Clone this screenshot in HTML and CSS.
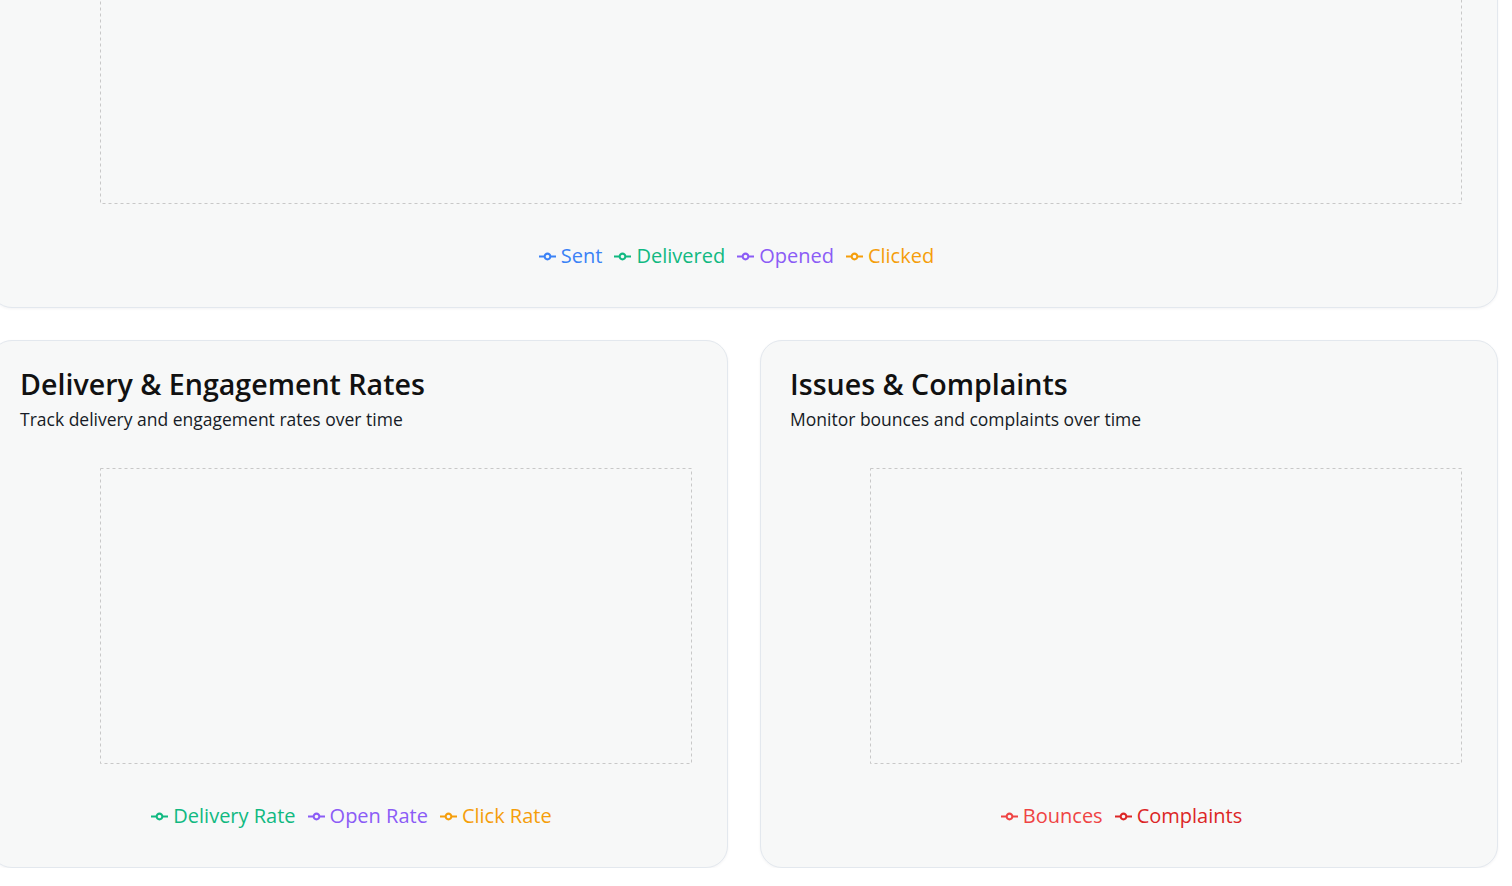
FILE: index.html
```html
<!DOCTYPE html>
<html lang="en">
<head>
<meta charset="utf-8">
<title>Email Analytics</title>
<link rel="stylesheet" href="styles.css">
</head>
<body>
<main class="page">
  <section class="card card-wide">
    <header class="card-head">
      <h2 class="card-title">Email Volume Over Time</h2>
      <p class="card-sub">Track sent, delivered, opened and clicked emails over time</p>
    </header>
    <div class="chart">
      <div class="plot"><svg class="grid"><rect x="0.5" y="0.5"/></svg></div>
      <ul class="legend">
        <li class="legend-item c-blue"><svg class="icon" viewBox="0 0 32 32"><path d="M0,16h10.67A5.33,5.33,0,1,1,21.33,16H32M21.33,16A5.33,5.33,0,1,1,10.67,16"/></svg>Sent</li>
        <li class="legend-item c-green"><svg class="icon" viewBox="0 0 32 32"><path d="M0,16h10.67A5.33,5.33,0,1,1,21.33,16H32M21.33,16A5.33,5.33,0,1,1,10.67,16"/></svg>Delivered</li>
        <li class="legend-item c-purple"><svg class="icon" viewBox="0 0 32 32"><path d="M0,16h10.67A5.33,5.33,0,1,1,21.33,16H32M21.33,16A5.33,5.33,0,1,1,10.67,16"/></svg>Opened</li>
        <li class="legend-item c-orange"><svg class="icon" viewBox="0 0 32 32"><path d="M0,16h10.67A5.33,5.33,0,1,1,21.33,16H32M21.33,16A5.33,5.33,0,1,1,10.67,16"/></svg>Clicked</li>
      </ul>
    </div>
  </section>

  <section class="card">
    <header class="card-head">
      <h2 class="card-title">Delivery &amp; Engagement Rates</h2>
      <p class="card-sub">Track delivery and engagement rates over time</p>
    </header>
    <div class="chart">
      <div class="plot"><svg class="grid"><rect x="0.5" y="0.5"/></svg></div>
      <ul class="legend">
        <li class="legend-item c-green"><svg class="icon" viewBox="0 0 32 32"><path d="M0,16h10.67A5.33,5.33,0,1,1,21.33,16H32M21.33,16A5.33,5.33,0,1,1,10.67,16"/></svg>Delivery Rate</li>
        <li class="legend-item c-purple"><svg class="icon" viewBox="0 0 32 32"><path d="M0,16h10.67A5.33,5.33,0,1,1,21.33,16H32M21.33,16A5.33,5.33,0,1,1,10.67,16"/></svg>Open Rate</li>
        <li class="legend-item c-orange"><svg class="icon" viewBox="0 0 32 32"><path d="M0,16h10.67A5.33,5.33,0,1,1,21.33,16H32M21.33,16A5.33,5.33,0,1,1,10.67,16"/></svg>Click Rate</li>
      </ul>
    </div>
  </section>

  <section class="card">
    <header class="card-head">
      <h2 class="card-title">Issues &amp; Complaints</h2>
      <p class="card-sub">Monitor bounces and complaints over time</p>
    </header>
    <div class="chart">
      <div class="plot"><svg class="grid"><rect x="0.5" y="0.5"/></svg></div>
      <ul class="legend">
        <li class="legend-item c-red"><svg class="icon" viewBox="0 0 32 32"><path d="M0,16h10.67A5.33,5.33,0,1,1,21.33,16H32M21.33,16A5.33,5.33,0,1,1,10.67,16"/></svg>Bounces</li>
        <li class="legend-item c-darkred"><svg class="icon" viewBox="0 0 32 32"><path d="M0,16h10.67A5.33,5.33,0,1,1,21.33,16H32M21.33,16A5.33,5.33,0,1,1,10.67,16"/></svg>Complaints</li>
      </ul>
    </div>
  </section>
</main>
</body>
</html>
```

FILE: styles.css
```css
* { box-sizing: border-box; }

html, body {
  margin: 0;
  padding: 0;
  background: #ffffff;
  overflow: hidden;
}

body {
  font-family: "Open Sans", "Noto Sans", "Liberation Sans", sans-serif;
  color: #111827;
}

.page {
  width: 1508px;
  margin: -220px 0 0 -10px;
  display: grid;
  grid-template-columns: 738px 738px;
  gap: 32px;
}

.card {
  background: #f7f8f8;
  border: 1px solid #e3e8ee;
  border-radius: 22px;
  padding: 25px 30px 37px 29px;
  box-shadow: 0 1px 3px rgba(15, 23, 42, 0.05);
  display: flex;
  flex-direction: column;
}

.card-wide { grid-column: 1 / -1; }

.card-head { display: flex; flex-direction: column; gap: 5px; }

.card-title {
  margin: 0;
  font-size: 28.6px;
  line-height: 36px;
  font-weight: 600;
  color: #111111;
}

.card-sub {
  margin: 0;
  font-size: 17.5px;
  line-height: 24px;
  color: #161b26;
}

.chart {
  display: flex;
  flex-direction: column;
  margin-top: 37px;
}

.plot {
  height: 296px;
  margin: 0 5px 0 80px;
}

.grid {
  display: block;
  width: 100%;
  height: 100%;
}

.grid rect {
  width: calc(100% - 1px);
  height: calc(100% - 1px);
  fill: none;
  stroke: #c8c8c8;
  stroke-width: 1;
  stroke-dasharray: 3 3;
}

.legend {
  list-style: none;
  margin: 38px 0 0;
  padding: 0 14px 0 0;
  display: flex;
  justify-content: center;
  gap: 12px;
  font-size: 20px;
  line-height: 28px;
}

.legend-item {
  display: flex;
  align-items: center;
  gap: 5px;
}

.icon {
  width: 17px;
  height: 17px;
  fill: none;
  stroke: currentColor;
  stroke-width: 4;
  margin-top: 1px;
}

.c-blue { color: #3b82f6; }
.c-green { color: #10b981; }
.c-purple { color: #8b5cf6; }
.c-orange { color: #f59e0b; }
.c-red { color: #ef4444; }
.c-darkred { color: #dc2626; }
```
